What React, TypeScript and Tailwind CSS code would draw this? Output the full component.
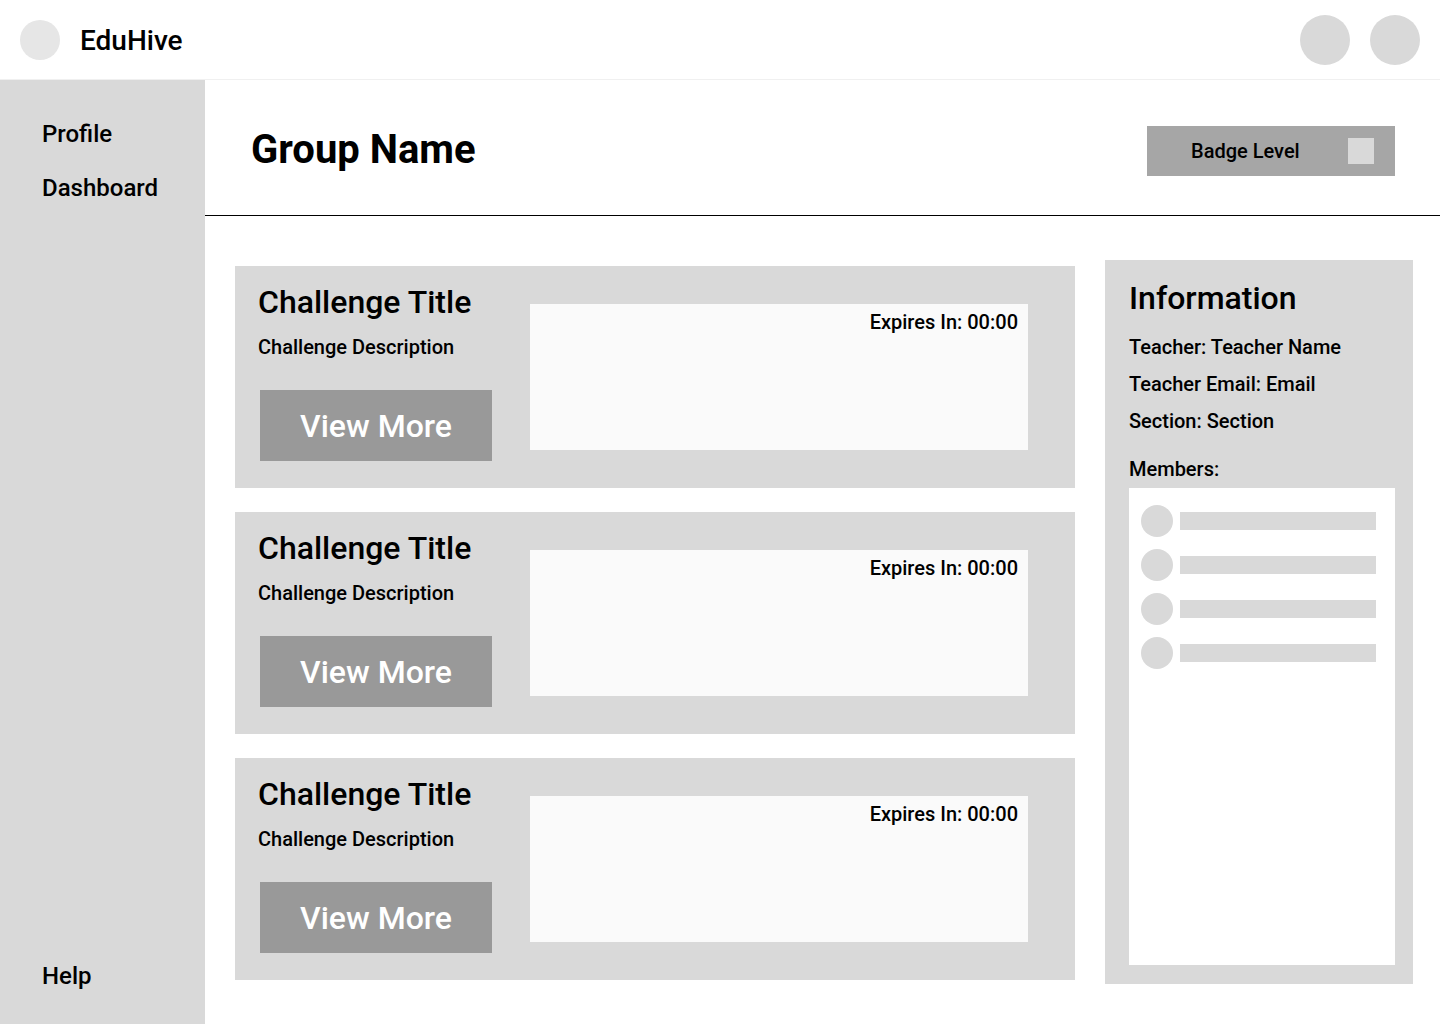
import React from "react"

const challenges = [1, 2, 3]
const members = [1, 2, 3, 4]

function ChallengeCard() {
	return (
		<div className="flex h-[222px] w-[840px] bg-[#d9d9d9]">
			<div className="w-[295px] pl-[23px] pt-[17px]">
				<h2 className="text-[32px] font-medium leading-[38px] text-black">Challenge Title</h2>
				<p className="mt-[14px] text-[20px] font-medium leading-[24px] text-black">Challenge Description</p>
				<button className="ml-[2px] mt-[31px] flex h-[71px] w-[232px] items-center justify-center bg-[#999999] text-[32px] font-medium text-white">
					View More
				</button>
			</div>
			<div className="mt-[38px] h-[146px] w-[498px] bg-[#fafafa] pr-[10px] pt-[6px] text-right text-[20px] font-medium leading-[24px] text-black">
				Expires In: 00:00
			</div>
		</div>
	)
}

export default function App() {
	return (
		<div className="flex h-screen w-full flex-col overflow-hidden bg-white" style={{ fontFamily: "Roboto, 'Liberation Sans', sans-serif" }}>
			<header className="flex h-20 shrink-0 items-center justify-between border-b border-[#f0f0f0] px-5">
				<div className="flex items-center gap-5">
					<div className="h-10 w-10 rounded-full bg-[#e6e6e6]" />
					<span className="mt-[2px] text-[28px] font-medium text-black">EduHive</span>
				</div>
				<div className="flex items-center gap-5">
					<div className="h-[50px] w-[50px] rounded-full bg-[#d9d9d9]" />
					<div className="h-[50px] w-[50px] rounded-full bg-[#d9d9d9]" />
				</div>
			</header>

			<div className="flex flex-1">
				<aside className="flex w-[205px] shrink-0 flex-col justify-between bg-[#d9d9d9] pb-[34px] pl-[42px] pt-[40px]">
					<nav className="flex flex-col gap-[26px] text-[24px] font-medium leading-[28px] text-black">
						<a>Profile</a>
						<a>Dashboard</a>
					</nav>
					<a className="text-[24px] font-medium leading-[28px] text-black">Help</a>
				</aside>

				<main className="flex flex-1 flex-col">
					<div className="flex h-[136px] items-center justify-between border-b border-black pl-[46px] pr-[45px]">
						<h1 className="mt-[5px] text-[40px] font-bold text-black">Group Name</h1>
						<button className="mt-[7px] flex h-[50px] w-[248px] items-center bg-[#a6a6a6] pl-[44px] text-[20px] font-medium text-black">
							<span>Badge Level</span>
							<span className="ml-auto mr-[21px] h-[26px] w-[26px] bg-[#d9d9d9]" />
						</button>
					</div>

					<div className="flex gap-[30px] pl-[30px] pt-[44px]">
						<div className="mt-[6px] flex flex-col gap-[24px]">
							{challenges.map((c) => (
								<ChallengeCard key={c} />
							))}
						</div>

						<section className="flex h-[724px] w-[308px] flex-col bg-[#d9d9d9] pl-[24px] pt-[19px]">
							<h2 className="text-[32px] font-medium leading-[38px] text-black">Information</h2>
							<div className="mt-[12px] text-[20px] font-medium leading-[37px] text-black">
								<p>Teacher: Teacher Name</p>
								<p>Teacher Email: Email</p>
								<p>Section: Section</p>
							</div>
							<p className="mt-[17px] text-[20px] font-medium leading-[24px] text-black">Members:</p>
							<div className="mt-[7px] flex h-[477px] w-[266px] flex-col gap-[12px] bg-white pl-[12px] pt-[17px]">
								{members.map((m) => (
									<div key={m} className="flex items-center gap-[7px]">
										<div className="h-8 w-8 rounded-full bg-[#d9d9d9]" />
										<div className="h-[18px] w-[196px] bg-[#d9d9d9]" />
									</div>
								))}
							</div>
						</section>
					</div>
				</main>
			</div>
		</div>
	)
}
